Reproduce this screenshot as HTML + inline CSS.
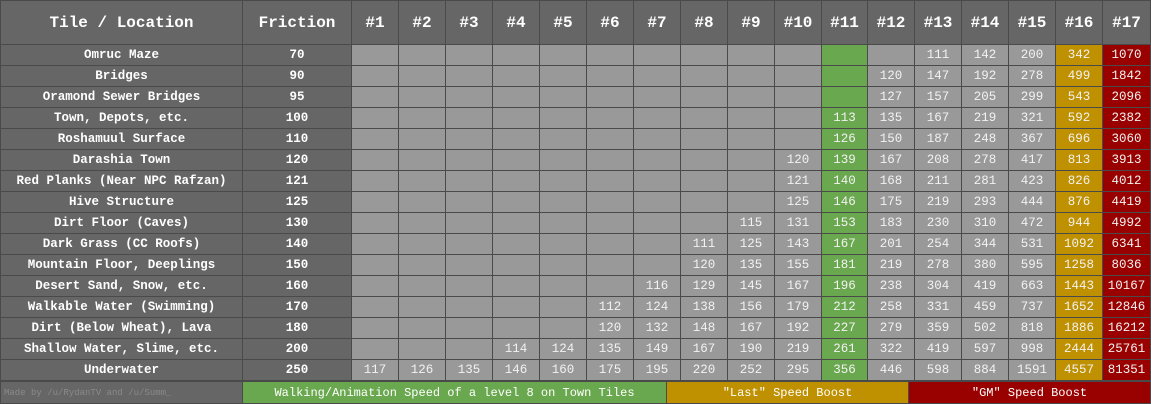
<!DOCTYPE html>
<html><head><meta charset="utf-8"><style>
body{margin:0;background:#555;width:1151px;height:404px;overflow:hidden;position:relative}
table{border-collapse:collapse;table-layout:fixed;width:1151px;font-family:"Liberation Mono",monospace}
td,th{border:1px solid #4a4a4a;padding:0;text-align:center;white-space:nowrap;overflow:hidden}
th{height:43px;background:#666;color:#fff;font-size:16px;font-weight:bold}
td{height:20px;font-size:12.5px;color:#f2f2f2;background:#999}
td.n{background:#666;font-weight:bold;color:#fff}
td.g{background:#6aa84f}td.y{background:#bf9000}td.r{background:#990000}
.f{position:absolute;top:381px;height:23px;line-height:23px;font-family:"Liberation Mono",monospace;font-size:12px;color:#fff;text-align:center;box-sizing:border-box;border:1px solid #4a4a4a;white-space:nowrap;overflow:hidden}
</style></head><body>
<table>
<colgroup><col style="width:242px"><col style="width:109px"><col style="width:47px"><col style="width:47px"><col style="width:47px"><col style="width:47px"><col style="width:47px"><col style="width:47px"><col style="width:47px"><col style="width:47px"><col style="width:47px"><col style="width:47px"><col style="width:46px"><col style="width:47px"><col style="width:47px"><col style="width:47px"><col style="width:47px"><col style="width:47px"><col style="width:48px"></colgroup>
<tr><th>Tile / Location</th><th>Friction</th><th>#1</th><th>#2</th><th>#3</th><th>#4</th><th>#5</th><th>#6</th><th>#7</th><th>#8</th><th>#9</th><th>#10</th><th>#11</th><th>#12</th><th>#13</th><th>#14</th><th>#15</th><th>#16</th><th>#17</th></tr>
<tr><td class="n">Omruc Maze</td><td class="n">70</td><td></td><td></td><td></td><td></td><td></td><td></td><td></td><td></td><td></td><td></td><td class="g"></td><td></td><td>111</td><td>142</td><td>200</td><td class="y">342</td><td class="r">1070</td></tr>
<tr><td class="n">Bridges</td><td class="n">90</td><td></td><td></td><td></td><td></td><td></td><td></td><td></td><td></td><td></td><td></td><td class="g"></td><td>120</td><td>147</td><td>192</td><td>278</td><td class="y">499</td><td class="r">1842</td></tr>
<tr><td class="n">Oramond Sewer Bridges</td><td class="n">95</td><td></td><td></td><td></td><td></td><td></td><td></td><td></td><td></td><td></td><td></td><td class="g"></td><td>127</td><td>157</td><td>205</td><td>299</td><td class="y">543</td><td class="r">2096</td></tr>
<tr><td class="n">Town, Depots, etc.</td><td class="n">100</td><td></td><td></td><td></td><td></td><td></td><td></td><td></td><td></td><td></td><td></td><td class="g">113</td><td>135</td><td>167</td><td>219</td><td>321</td><td class="y">592</td><td class="r">2382</td></tr>
<tr><td class="n">Roshamuul Surface</td><td class="n">110</td><td></td><td></td><td></td><td></td><td></td><td></td><td></td><td></td><td></td><td></td><td class="g">126</td><td>150</td><td>187</td><td>248</td><td>367</td><td class="y">696</td><td class="r">3060</td></tr>
<tr><td class="n">Darashia Town</td><td class="n">120</td><td></td><td></td><td></td><td></td><td></td><td></td><td></td><td></td><td></td><td>120</td><td class="g">139</td><td>167</td><td>208</td><td>278</td><td>417</td><td class="y">813</td><td class="r">3913</td></tr>
<tr><td class="n">Red Planks (Near NPC Rafzan)</td><td class="n">121</td><td></td><td></td><td></td><td></td><td></td><td></td><td></td><td></td><td></td><td>121</td><td class="g">140</td><td>168</td><td>211</td><td>281</td><td>423</td><td class="y">826</td><td class="r">4012</td></tr>
<tr><td class="n">Hive Structure</td><td class="n">125</td><td></td><td></td><td></td><td></td><td></td><td></td><td></td><td></td><td></td><td>125</td><td class="g">146</td><td>175</td><td>219</td><td>293</td><td>444</td><td class="y">876</td><td class="r">4419</td></tr>
<tr><td class="n">Dirt Floor (Caves)</td><td class="n">130</td><td></td><td></td><td></td><td></td><td></td><td></td><td></td><td></td><td>115</td><td>131</td><td class="g">153</td><td>183</td><td>230</td><td>310</td><td>472</td><td class="y">944</td><td class="r">4992</td></tr>
<tr><td class="n">Dark Grass (CC Roofs)</td><td class="n">140</td><td></td><td></td><td></td><td></td><td></td><td></td><td></td><td>111</td><td>125</td><td>143</td><td class="g">167</td><td>201</td><td>254</td><td>344</td><td>531</td><td class="y">1092</td><td class="r">6341</td></tr>
<tr><td class="n">Mountain Floor, Deeplings</td><td class="n">150</td><td></td><td></td><td></td><td></td><td></td><td></td><td></td><td>120</td><td>135</td><td>155</td><td class="g">181</td><td>219</td><td>278</td><td>380</td><td>595</td><td class="y">1258</td><td class="r">8036</td></tr>
<tr><td class="n">Desert Sand, Snow, etc.</td><td class="n">160</td><td></td><td></td><td></td><td></td><td></td><td></td><td>116</td><td>129</td><td>145</td><td>167</td><td class="g">196</td><td>238</td><td>304</td><td>419</td><td>663</td><td class="y">1443</td><td class="r">10167</td></tr>
<tr><td class="n">Walkable Water (Swimming)</td><td class="n">170</td><td></td><td></td><td></td><td></td><td></td><td>112</td><td>124</td><td>138</td><td>156</td><td>179</td><td class="g">212</td><td>258</td><td>331</td><td>459</td><td>737</td><td class="y">1652</td><td class="r">12846</td></tr>
<tr><td class="n">Dirt (Below Wheat), Lava</td><td class="n">180</td><td></td><td></td><td></td><td></td><td></td><td>120</td><td>132</td><td>148</td><td>167</td><td>192</td><td class="g">227</td><td>279</td><td>359</td><td>502</td><td>818</td><td class="y">1886</td><td class="r">16212</td></tr>
<tr><td class="n">Shallow Water, Slime, etc.</td><td class="n">200</td><td></td><td></td><td></td><td>114</td><td>124</td><td>135</td><td>149</td><td>167</td><td>190</td><td>219</td><td class="g">261</td><td>322</td><td>419</td><td>597</td><td>998</td><td class="y">2444</td><td class="r">25761</td></tr>
<tr><td class="n">Underwater</td><td class="n">250</td><td>117</td><td>126</td><td>135</td><td>146</td><td>160</td><td>175</td><td>195</td><td>220</td><td>252</td><td>295</td><td class="g">356</td><td>446</td><td>598</td><td>884</td><td>1591</td><td class="y">4557</td><td class="r">81351</td></tr>
</table>
<div class="f" style="left:0;width:243px;background:#666;color:#8a8a8a;font-size:9px;text-align:left;padding-left:3px">Made by /u/RydanTV and /u/Summ_</div>
<div class="f" style="left:242px;width:425px;background:#6aa84f">Walking/Animation Speed of a level 8 on Town Tiles</div>
<div class="f" style="left:666px;width:243px;background:#bf9000">"Last" Speed Boost</div>
<div class="f" style="left:908px;width:243px;background:#990000">"GM" Speed Boost</div>
</body></html>
